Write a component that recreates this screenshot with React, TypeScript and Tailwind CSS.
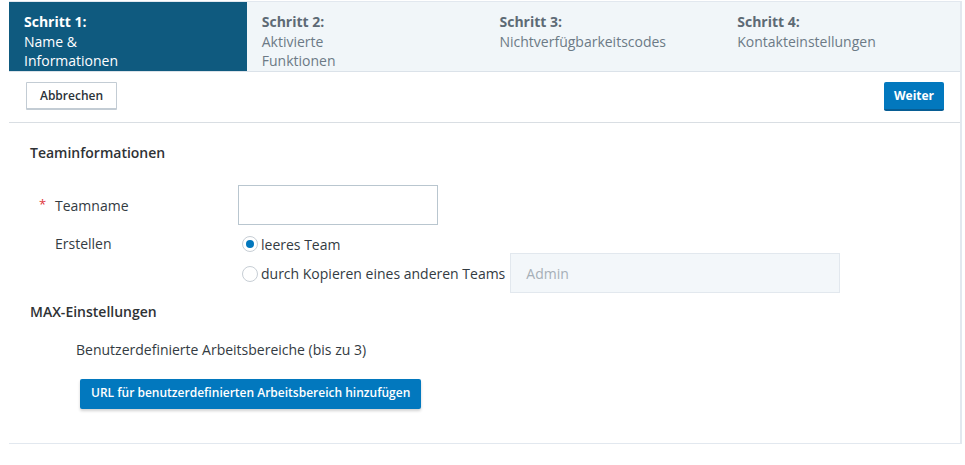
import React from "react";

const steps = [
  { t: "Schritt 1:", d: ["Name &", "Informationen"] },
  { t: "Schritt 2:", d: ["Aktivierte", "Funktionen"] },
  { t: "Schritt 3:", d: ["Nichtverfügbarkeitscodes"] },
  { t: "Schritt 4:", d: ["Kontakteinstellungen"] },
];

export default function App() {
  return (
    <div className="w-[965px] h-[465px] bg-white pt-[1px]" style={{ fontFamily: '"Open Sans", sans-serif' }}>
      <div className="ml-[9px] w-[953px] border-t border-r-2 border-b border-[#e2e8ef]">
        <div className="grid grid-cols-4 h-[70px] border-b border-[#dbe2e9] bg-[#f1f6f9]">
          {steps.map((s, i) => (
            <div
              key={i}
              className={
                "pl-[15px] pt-[10px] text-[14px] leading-[19.5px] " +
                (i === 0 ? "bg-[#0f5a7f] text-white" : "text-[#6c7a86]")
              }
            >
              <div className={"font-bold " + (i === 0 ? "text-white" : "text-[#5d6a75]")}>{s.t}</div>
              {s.d.map((l, j) => (
                <div key={j}>{l}</div>
              ))}
            </div>
          ))}
        </div>
        <div className="flex items-start justify-between h-[51px] border-b border-[#d9dee3] pl-[17px] pr-[16px] pt-[10px]">
          <button className="h-[28px] w-[91px] border border-[#c3ccd4] border-b-2 bg-white text-[12px] font-semibold text-[#2b3238] rounded-[1px]">
            Abbrechen
          </button>
          <button className="h-[29px] w-[60px] bg-[#0278be] border-b-2 border-[#075d94] text-white text-[12px] font-bold rounded-[2px]">
            Weiter
          </button>
        </div>
        <div className="pl-[21px] pt-[20px] pb-[34px] text-[14px] text-[#333b42]">
          <div className="font-semibold text-[#2f3235] leading-[20px]">Teaminformationen</div>
          <div className="flex items-center mt-[22px]">
            <div className="w-[208px] flex items-center">
              <span className="text-[#e0353b] w-[17px] pl-[9px] text-[13px]">*</span>
              <span className="ml-[8px]">Teamname</span>
            </div>
            <div className="w-[200px] h-[40px] border border-[#b9c6cf] bg-white"></div>
          </div>
          <div className="flex mt-[9px]">
            <div className="w-[208px] pl-[25px] leading-[20px]">Erstellen</div>
            <div className="flex flex-col">
              <label className="flex items-center h-[20px] ml-[4px]">
                <span className="w-[16px] h-[16px] rounded-full border border-[#c7ced5] flex items-center justify-center bg-white">
                  <span className="w-[8px] h-[8px] rounded-full bg-[#0277bd]"></span>
                </span>
                <span className="ml-[3px]">leeres Team</span>
              </label>
              <div className="flex items-center mt-[-1px]">
                <label className="flex items-center ml-[4px] mt-[1px]">
                  <span className="w-[16px] h-[16px] rounded-full border border-[#c7ced5] bg-white"></span>
                  <span className="ml-[3px]">durch Kopieren eines anderen Teams</span>
                </label>
                <div className="ml-[5px] w-[330px] h-[40px] bg-[#f3f7fa] border border-[#e2e8ee] flex items-center pl-[15px] text-[#a6afb7] text-[14px]">
                  Admin
                </div>
              </div>
            </div>
          </div>
          <div className="mt-[9px] font-semibold text-[#2f3235] leading-[20px]">MAX-Einstellungen</div>
          <div className="mt-[18px] ml-[46px] leading-[20px]">Benutzerdefinierte Arbeitsbereiche (bis zu 3)</div>
          <button className="mt-[19px] ml-[50px] h-[30px] px-[11px] bg-[#0278be] text-white text-[12px] font-semibold rounded-[2px] shadow-[0_2px_3px_rgba(0,0,0,0.18)] pb-[3px]">
            URL für benutzerdefinierten Arbeitsbereich hinzufügen
          </button>
        </div>
      </div>
    </div>
  );
}
